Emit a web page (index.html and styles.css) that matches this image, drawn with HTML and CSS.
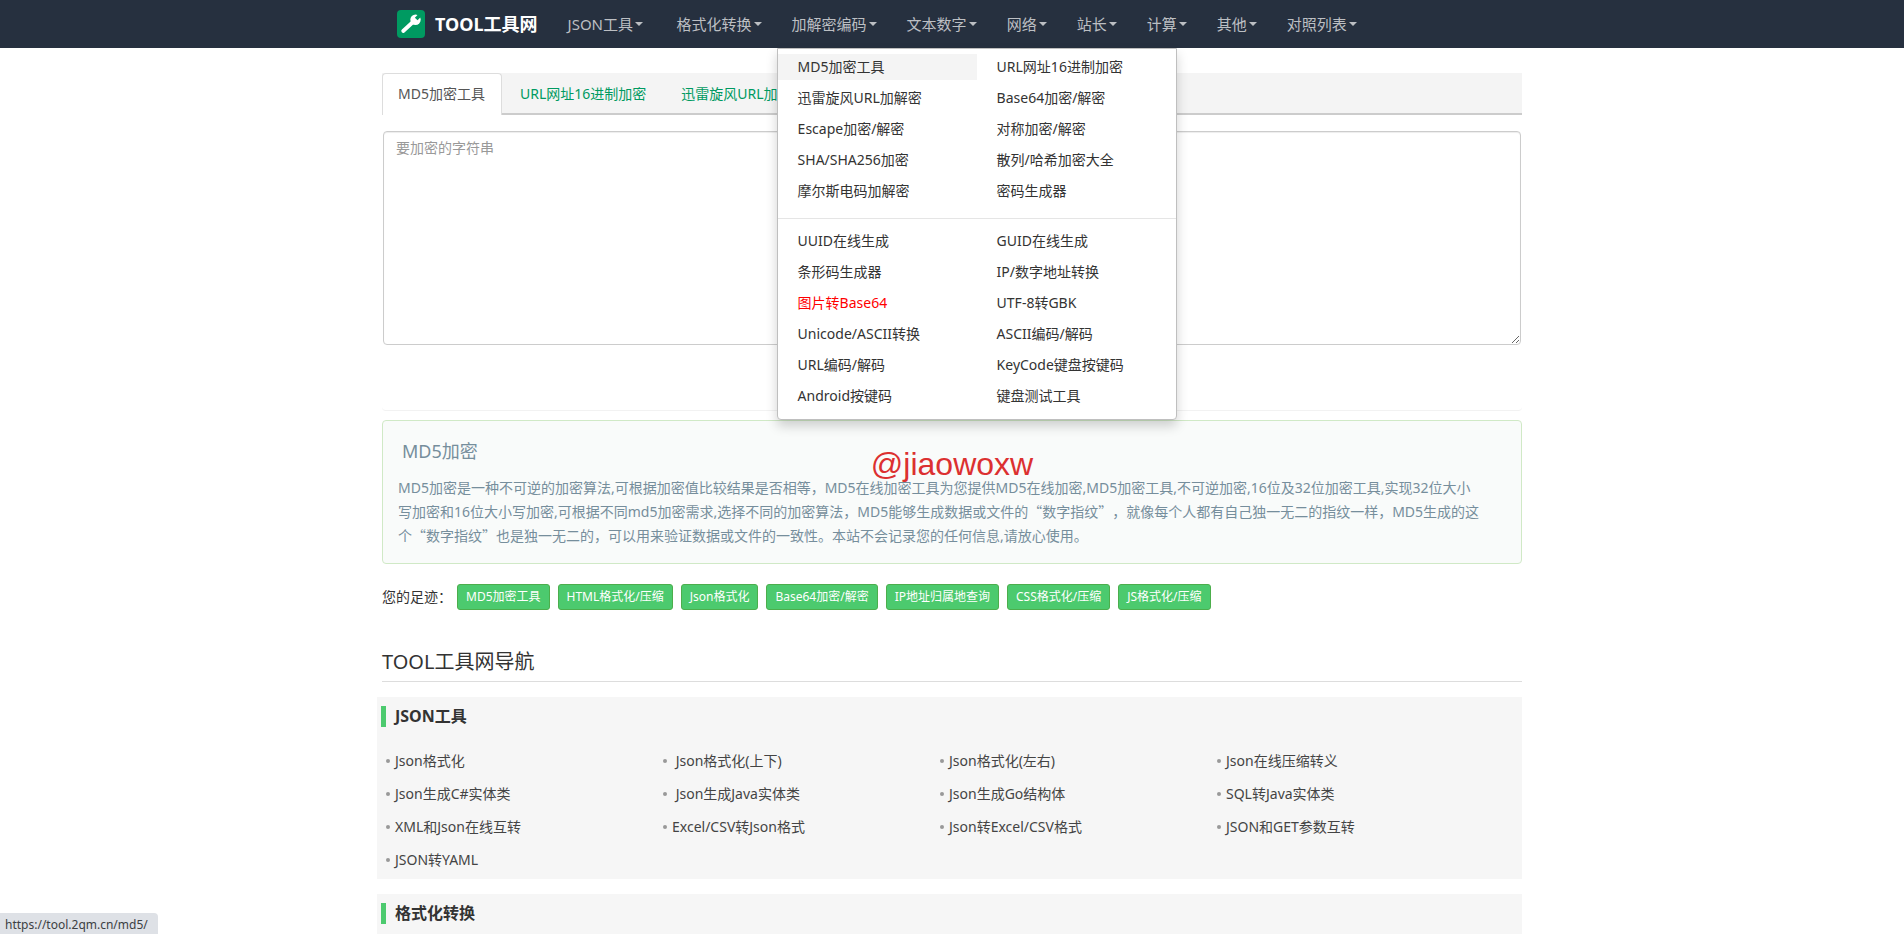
FILE: index.html
```html
<!DOCTYPE html>
<html lang="zh-CN">
<head>
<meta charset="utf-8">
<title>MD5加密工具 - TOOL工具网</title>
<link rel="stylesheet" href="styles.css">
</head>
<body>
<header class="navbar">
  <div class="container navbar-inner">
    <a class="brand" href="#">
      <svg class="brand-icon" viewBox="0 0 28 28" aria-hidden="true">
        <rect width="28" height="28" rx="4" fill="#009a61"/>
        <path d="M6.200 21 16 12" stroke="#fff" stroke-width="3.800" stroke-linecap="round"/>
        <circle cx="18.500" cy="9.700" r="5.200" fill="#fff"/>
        <path d="M19.200 9 25 3.200" stroke="#009a61" stroke-width="3.800"/>
      </svg>
      <span>TOOL工具网</span>
    </a>
    <nav>
      <ul class="nav">
        <li><a href="#">JSON工具<i class="caret"></i></a></li>
        <li><a href="#">格式化转换<i class="caret"></i></a></li>
        <li class="open"><a href="#">加解密编码<i class="caret"></i></a>
          <div class="dropdown">
            <ul class="menu">
              <li><a class="hover" href="#">MD5加密工具</a></li>
              <li><a href="#">URL网址16进制加密</a></li>
              <li><a href="#">迅雷旋风URL加解密</a></li>
              <li><a href="#">Base64加密/解密</a></li>
              <li><a href="#">Escape加密/解密</a></li>
              <li><a href="#">对称加密/解密</a></li>
              <li><a href="#">SHA/SHA256加密</a></li>
              <li><a href="#">散列/哈希加密大全</a></li>
              <li><a href="#">摩尔斯电码加解密</a></li>
              <li><a href="#">密码生成器</a></li>
            </ul>
            <hr class="divider">
            <ul class="menu">
              <li><a href="#">UUID在线生成</a></li>
              <li><a href="#">GUID在线生成</a></li>
              <li><a href="#">条形码生成器</a></li>
              <li><a href="#">IP/数字地址转换</a></li>
              <li><a class="hot" href="#">图片转Base64</a></li>
              <li><a href="#">UTF-8转GBK</a></li>
              <li><a href="#">Unicode/ASCII转换</a></li>
              <li><a href="#">ASCII编码/解码</a></li>
              <li><a href="#">URL编码/解码</a></li>
              <li><a href="#">KeyCode键盘按键码</a></li>
              <li><a href="#">Android按键码</a></li>
              <li><a href="#">键盘测试工具</a></li>
            </ul>
          </div>
        </li>
        <li><a href="#">文本数字<i class="caret"></i></a></li>
        <li><a href="#">网络<i class="caret"></i></a></li>
        <li><a href="#">站长<i class="caret"></i></a></li>
        <li><a href="#">计算<i class="caret"></i></a></li>
        <li><a href="#">其他<i class="caret"></i></a></li>
        <li><a href="#">对照列表<i class="caret"></i></a></li>
      </ul>
    </nav>
  </div>
</header>

<main class="container">
  <ul class="tabs">
    <li><a class="active" href="#">MD5加密工具</a></li>
    <li><a href="#">URL网址16进制加密</a></li>
    <li><a href="#">迅雷旋风URL加解密</a></li>
  </ul>
  <section class="panel">
    <textarea class="source" aria-label="要加密的字符串" placeholder="要加密的字符串"></textarea>
  </section>

  <section class="intro">
    <h2>MD5加密</h2>
    <p>MD5加密是一种不可逆的加密算法,可根据加密值比较结果是否相等，MD5在线加密工具为您提供MD5在线加密,MD5加密工具,不可逆加密,16位及32位加密工具,实现32位大小写加密和16位大小写加密,可根据不同md5加密需求,选择不同的加密算法，MD5能够生成数据或文件的<span class="quote">“数字指纹”，</span>就像每个人都有自己独一无二的指纹一样，MD5生成的这个<span class="quote">“数字指纹”</span>也是独一无二的，可以用来验证数据或文件的一致性。本站不会记录您的任何信息,请放心使用。</p>
    <div class="watermark">@jiaowoxw</div>
  </section>

  <div class="history">
    <span class="history-label">您的足迹：</span>
    <a href="#">MD5加密工具</a>
    <a href="#">HTML格式化/压缩</a>
    <a href="#">Json格式化</a>
    <a href="#">Base64加密/解密</a>
    <a href="#">IP地址归属地查询</a>
    <a href="#">CSS格式化/压缩</a>
    <a href="#">JS格式化/压缩</a>
  </div>

  <h2 class="page-title">TOOL工具网导航</h2>

  <section class="group">
    <h3>JSON工具</h3>
    <ul class="links">
      <li><a href="#">Json格式化</a></li>
      <li><a href="#">&nbsp;Json格式化(上下)</a></li>
      <li><a href="#">Json格式化(左右)</a></li>
      <li><a href="#">Json在线压缩转义</a></li>
      <li><a href="#">Json生成C#实体类</a></li>
      <li><a href="#">&nbsp;Json生成Java实体类</a></li>
      <li><a href="#">Json生成Go结构体</a></li>
      <li><a href="#">SQL转Java实体类</a></li>
      <li><a href="#">XML和Json在线互转</a></li>
      <li><a href="#">Excel/CSV转Json格式</a></li>
      <li><a href="#">Json转Excel/CSV格式</a></li>
      <li><a href="#">JSON和GET参数互转</a></li>
      <li><a href="#">JSON转YAML</a></li>
    </ul>
  </section>
  <section class="group">
    <h3>格式化转换</h3>
  </section>
</main>

<div class="status">https://tool.2qm.cn/md5/</div>
</body>
</html>
```

FILE: styles.css
```css
* { box-sizing: border-box; }

body {
  margin: 0;
  height: 100vh;
  overflow: hidden;
  background: #fff;
  color: #333;
  font: 14px/20px "Noto Sans", "Noto Sans CJK SC", sans-serif;
}

a { color: inherit; text-decoration: none; }
ul { list-style: none; margin: 0; padding: 0; }
h2, h3, p { margin: 0; }

.container {
  max-width: 1170px;
  margin: 0 auto;
  padding: 0 15px;
}

/* top navigation */
.navbar {
  position: relative;
  z-index: 10;
  background: #26303f;
}
.navbar-inner {
  display: flex;
  align-items: center;
  height: 48px;
}
.brand {
  display: flex;
  align-items: center;
  gap: 10px;
  padding: 0 15px;
  color: #fff;
  font-size: 18px;
  font-weight: 700;
  white-space: nowrap;
}
.brand-icon { width: 28px; height: 28px; }
.nav { display: flex; }
.nav > li { position: relative; }
.nav > li > a {
  display: flex;
  align-items: center;
  gap: 2px;
  height: 48px;
  padding: 0 15px;
  color: #bcbfc3;
  font-size: 15px;
  white-space: nowrap;
}
.nav > li:first-child { min-width: 109px; }
.caret {
  border: 4px solid transparent;
  border-top-color: currentColor;
  border-bottom: 0;
}

/* drop-down */
.dropdown {
  position: absolute;
  top: 100%;
  left: 0;
  width: 400px;
  padding: 5px 0;
  background: #fff;
  border: 1px solid #bfbfbf;
  border-radius: 0 0 4px 4px;
  box-shadow: 0 6px 12px rgba(0, 0, 0, .18);
}
.menu {
  display: grid;
  grid-template-columns: 1fr 1fr;
}
.menu a {
  display: block;
  margin-bottom: 5px;
  padding: 3px 20px;
  white-space: nowrap;
}
.menu .hover { background: #f4f4f4; }
.menu .hot { color: #f00; }
.divider {
  height: 1px;
  margin: 9px 0;
  border: 0;
  background: #e5e5e5;
}

/* tabs */
.tabs {
  display: flex;
  gap: 2px;
  height: 42px;
  margin-top: 25px;
  background: #f4f4f4;
  border-bottom: 2px solid #ccc;
}
.tabs a {
  display: block;
  height: 42px;
  padding: 11px 16px 11px 15px;
  border: 1px solid transparent;
  border-bottom: 0;
  border-radius: 4px 4px 0 0;
  color: #009a61;
  line-height: 18px;
}
.tabs .active {
  background: #fff;
  border-color: #ddd;
  color: #555;
}

.panel {
  padding: 16px 1px 65px;
  border-bottom: 1px solid #f2f2f2;
  border-radius: 4px;
}
.source {
  display: block;
  width: 100%;
  height: 214px;
  padding: 6px 12px;
  border: 1px solid #ccc;
  border-radius: 4px;
  box-shadow: inset 0 1px 1px rgba(0, 0, 0, .075);
  color: #555;
  font: inherit;
  resize: vertical;
}
.source::placeholder { color: #999; }

/* description */
.intro {
  position: relative;
  margin-top: 9px;
  padding: 15px 40px 15px 15px;
  background: #f9fbfa;
  border: 1px solid #d0e9c6;
  border-radius: 4px;
  color: #768e9c;
}
.intro h2 {
  padding: 3px 4px;
  font-size: 18px;
  font-weight: 400;
  line-height: 24px;
}
.intro p {
  margin-top: 10px;
  line-height: 24px;
  text-spacing-trim: space-all;
}
.quote {
  font-family: "Noto Sans CJK SC", sans-serif;
  line-height: 1;
}
.watermark {
  position: absolute;
  top: 25px;
  left: 0;
  right: 0;
  text-align: center;
  color: #dc3030;
  font: 32px/36px "Liberation Sans", Arial, sans-serif;
}

/* recently used */
.history {
  display: flex;
  align-items: center;
  gap: 8px;
  margin-top: 20px;
}
.history-label { width: 67px; white-space: nowrap; }
.history a {
  padding: 3px 8px;
  background: #4cca6e;
  border: 1px solid #4cae4c;
  border-radius: 3px;
  color: #fff;
  font-size: 12px;
  line-height: 18px;
  white-space: nowrap;
}

/* site map */
.page-title {
  margin-top: 40px;
  padding-bottom: 7px;
  border-bottom: 1px solid #ddd;
  font-size: 20px;
  font-weight: 400;
  line-height: 24px;
}
.group {
  min-height: 150px;
  margin: 15px 0 0 -5px;
  padding: 9px 28px 3px 4px;
  background: #f6f6f6;
}
.group h3 {
  padding-left: 9px;
  border-left: 5px solid #4cca6e;
  font-size: 16px;
  line-height: 21px;
}
.links {
  display: grid;
  grid-template-columns: repeat(4, 1fr);
  margin-top: 17px;
  padding-left: 5px;
}
.links li {
  display: flex;
  align-items: center;
  gap: 5px;
  height: 33px;
  color: #444;
}
.links li::before {
  content: "";
  width: 4px;
  height: 4px;
  border-radius: 50%;
  background: #999;
}

.status {
  position: fixed;
  left: 0;
  bottom: 0;
  padding: 3px 10px 0 5px;
  background: #dee1e6;
  border-radius: 0 4px 0 0;
  color: #3c4043;
  font-size: 12px;
  line-height: 18px;
}
```
